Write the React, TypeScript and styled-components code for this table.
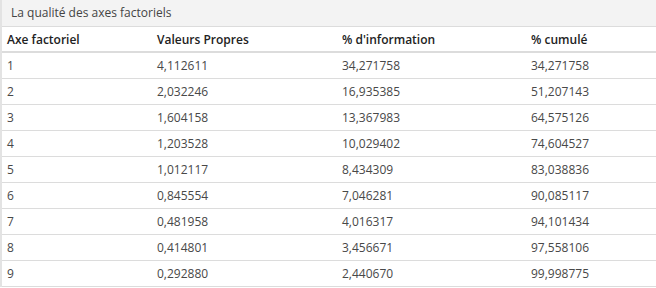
import React from 'react'
import styled, { createGlobalStyle } from 'styled-components'

const GlobalStyle = createGlobalStyle`
  html, body {
    margin: 0;
    padding: 0;
    background: #fff;
  }
  body {
    font-family: 'Open Sans', 'Noto Sans', sans-serif;
    color: #333;
  }
`

const Panel = styled.div`
  width: 656px;
  border-left: 2px solid #e3e3e3;
  box-sizing: border-box;
`

const PanelTitle = styled.div`
  height: 26px;
  line-height: 26px;
  padding-left: 9px;
  background: #f3f3f3;
  border-bottom: 1px solid #dcdcdc;
  font-size: 12px;
  color: #444;
`

const Row = styled.div<{ head?: boolean }>`
  display: grid;
  grid-template-columns: 150px 185px 189px 1fr;
  align-items: center;
  height: ${p => (p.head ? '24px' : '25px')};
  border-bottom: ${p => (p.head ? '2px' : '1px')} solid #dcdcdc;
  font-size: 12px;
  font-weight: ${p => (p.head ? 600 : 400)};
  color: ${p => (p.head ? '#222' : '#484848')};
`

const Cell = styled.div`
  padding-left: 5px;
  white-space: nowrap;
`

const headers = ['Axe factoriel', 'Valeurs Propres', "% d'information", '% cumulé']

const rows = [
  ['1', '4,112611', '34,271758', '34,271758'],
  ['2', '2,032246', '16,935385', '51,207143'],
  ['3', '1,604158', '13,367983', '64,575126'],
  ['4', '1,203528', '10,029402', '74,604527'],
  ['5', '1,012117', '8,434309', '83,038836'],
  ['6', '0,845554', '7,046281', '90,085117'],
  ['7', '0,481958', '4,016317', '94,101434'],
  ['8', '0,414801', '3,456671', '97,558106'],
  ['9', '0,292880', '2,440670', '99,998775'],
]

export default function App() {
  return (
    <>
      <GlobalStyle />
      <Panel>
        <PanelTitle>La qualité des axes factoriels</PanelTitle>
        <Row head>
          {headers.map(h => (
            <Cell key={h}>{h}</Cell>
          ))}
        </Row>
        {rows.map(r => (
          <Row key={r[0]}>
            {r.map((v, i) => (
              <Cell key={i}>{v}</Cell>
            ))}
          </Row>
        ))}
      </Panel>
    </>
  )
}
